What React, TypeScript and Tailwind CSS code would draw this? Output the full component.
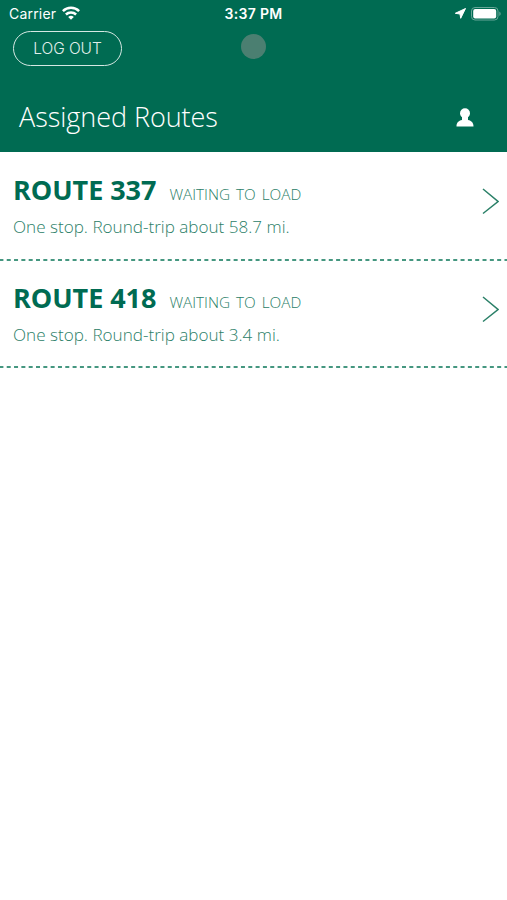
import React from 'react';

const routes = [
  { id: 337, status: 'WAITING TO LOAD', detail: 'One stop. Round-trip about 58.7 mi.' },
  { id: 418, status: 'WAITING TO LOAD', detail: 'One stop. Round-trip about 3.4 mi.' },
];

const App = () => {
  return (
    <div className="min-h-screen bg-white font-['Open_Sans',sans-serif]">
      <header className="h-[152px] bg-[#006b52] text-white">
        <div className="relative flex h-7 items-center justify-between pl-[9px] pr-[6px] font-['Inter',sans-serif]">
          <div className="flex items-center gap-[6px]">
            <span className="text-[14px] leading-5 tracking-[0.2px]">Carrier</span>
            <svg className="-mt-[2px]" width="18" height="14" viewBox="0 0 18 14" fill="none" stroke="currentColor" strokeWidth="2.5">
              <path d="M.9 5.2a11.5 11.5 0 0 1 16.2 0" />
              <path d="M3.9 8.5a7.3 7.3 0 0 1 10.2 0" />
              <path d="M9 13.8 6.2 11a4 4 0 0 1 5.6 0z" fill="currentColor" stroke="none" />
            </svg>
          </div>
          <span className="absolute inset-x-0 text-center text-[14px] font-semibold leading-5 tracking-[0.3px]">3:37 PM</span>
          <div className="flex items-center gap-[4px]">
            <svg className="-mt-[1px]" width="13" height="13" viewBox="0 0 13 13" fill="currentColor" stroke="currentColor" strokeLinejoin="round">
              <path d="M11.500 1.500 6.700 11.300 6 7 1.300 6.300z" />
            </svg>
            <svg className="-mt-[1px]" width="30" height="14" viewBox="0 0 30 14" fill="none">
              <rect x=".5" y=".5" width="26.5" height="12.5" rx="3.5" stroke="#66a697" />
              <rect x="2.2" y="2" width="23" height="9.5" rx="2" fill="currentColor" />
              <path d="M28.3 4.6c1.8.8 1.8 3.6 0 4.4z" fill="#66a697" />
            </svg>
          </div>
        </div>
        <div className="relative px-[13px] pt-[3px]">
          <button className="block h-[35px] w-[109px] rounded-full border-[1.5px] border-[#d5e8e3] font-['Inter',sans-serif] text-[15.5px] font-light tracking-[-0.1px] text-[#e0efeb]">LOG OUT</button>
          <span className="absolute left-[241px] top-[6px] h-[25px] w-[25px] rounded-full bg-[#4b7f71]" />
        </div>
        <div className="mt-[31px] flex items-center justify-between pl-[19px] pr-[33px]">
          <h1 className="text-[27px] font-light leading-10 tracking-[-0.05px]">Assigned Routes</h1>
          <svg width="18" height="19" viewBox="0 0 18 19" fill="currentColor">
            <circle cx="9" cy="5.2" r="5" />
            <path d="M.5 18.5c0-4 2-5.6 5.5-6.5V9h6v3c3.5.9 5.5 2.500 5.500 6.500z" />
          </svg>
        </div>
      </header>
      <main className="pt-[1px]">
        {routes.map(({ id, status, detail }) => (
          <section key={id} className="flex h-[107.5px] flex-col text-[#006b52]">
            <div className="flex flex-1 items-start justify-between pl-[13px] pr-[8px]">
              <div className="pt-[19px]">
                <div className="flex items-baseline gap-[13px]">
                  <h2 className="text-[27px] font-bold leading-9 tracking-[-0.05px]">ROUTE {id}</h2>
                  <span className="text-[15.3px] font-light text-[#2b8068] [word-spacing:2px]">{status}</span>
                </div>
                <p className="text-[17.1px] font-light leading-[38px] text-[#2b8068]">{detail}</p>
              </div>
              <svg className="mt-[34px]" width="17" height="28" viewBox="0 0 17 28" fill="none" stroke="#2b8068" strokeWidth="1.5">
                <path d="M1 2 16 14.5 1 26.5" />
              </svg>
            </div>
            <svg className="block h-[2px] w-full" stroke="#459780" strokeWidth="2">
              <line x1="0" y1="1" x2="507" y2="1" strokeDasharray="4 3.32" strokeDashoffset="0.6" />
            </svg>
          </section>
        ))}
      </main>
    </div>
  );
};

export default App;
